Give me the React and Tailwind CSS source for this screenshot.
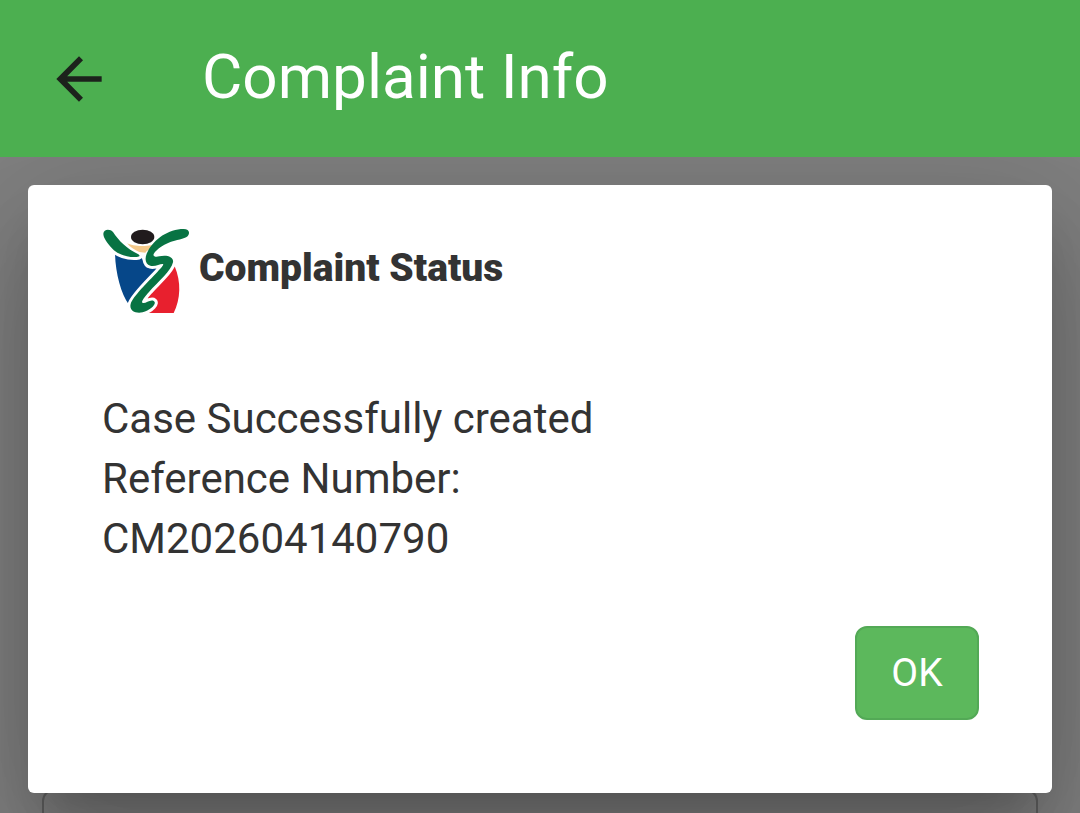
const ARM =
  "M22 35 C23 20 43 20 51 30 C68 56 92 80 127 97 C134 102 130 105 122 105 C96 107 62 98 45 76 C33 60 22 48 22 35Z";
const RIBBON =
  "M279 34 C278 48 257 51 236 56 C206 64 182 80 173 96 C170 104 180 105 190 103 C212 98 234 104 231 121 C226 146 186 180 159 210 C143 228 136 239 139 242 C147 247 160 232 172 236 C186 243 165 264 140 271 C117 276 99 265 104 246 C110 224 155 181 184 150 C197 136 204 129 201 126 C194 124 178 135 163 131 C146 126 145 106 156 87 C174 52 217 21 263 21 C274 21 280 26 279 34Z";

function Logo() {
  return (
    <svg viewBox="0 0 300 300" className="size-[100px] shrink-0" aria-hidden="true">
      <path d="M57 88 C75 102 98 108 124 111 L136 106 L152 136 L195 140 L98 247 C75 215 57 150 57 88Z" fill="#064789" />
      <path d="M236 133 C256 180 254 232 233 273 L148 273 L168 253 L152 228 L215 150Z" fill="#e8202e" />
      <g fill="#fff" stroke="#fff" strokeWidth="18" strokeLinejoin="round">
        <path d={ARM} />
        <path d={RIBBON} />
      </g>
      <path d="M93 63 C110 75 168 75 184 63 C175 79 157 80 148 92 L130 90 C116 84 102 76 93 63Z" fill="#f5c98a" />
      <path d={ARM} fill="#087343" />
      <path d={RIBBON} fill="#087343" />
      <ellipse cx="140" cy="45" rx="35" ry="22" fill="#211b1d" />
    </svg>
  );
}

export default function App() {
  return (
    <div className="flex min-h-screen flex-col overflow-hidden bg-[#808080] font-[Roboto,sans-serif]">
      <header className="relative z-20 flex h-[157px] items-center bg-[#4caf50] pl-[45px]">
        <button type="button" aria-label="Back" className="text-[#1c221c]">
          <svg viewBox="0 0 24 24" className="size-[68px]" fill="currentColor" aria-hidden="true">
            <path d="M20 11H7.83l5.59-5.59L12 4l-8 8 8 8 1.41-1.41L7.83 13H20v-2z" />
          </svg>
        </button>
        <h1 className="ml-[89px] pb-1 text-[62px] leading-[72px] text-white">Complaint Info</h1>
      </header>
      <main className="flex flex-1 flex-col pt-7">
        <div
          role="dialog"
          aria-labelledby="status-title"
          className="relative z-10 mx-7 flex flex-col rounded-md bg-white pt-[37px] pr-[73px] pb-[73px] pl-[74px] text-[#333] shadow-[0_31px_42px_-20px_rgba(0,0,0,0.2),0_67px_106px_8px_rgba(0,0,0,0.14),0_25px_129px_22px_rgba(0,0,0,0.12)]"
        >
          <div className="-ml-1.5 flex h-[100px] items-center">
            <Logo />
            <h2 id="status-title" className="ml-[3px] pb-2 text-[39px] leading-[56px] font-black">
              Complaint Status
            </h2>
          </div>
          <div className="mt-[67px] text-[42px] leading-[60px]">
            <p>Case Successfully created</p>
            <p>Reference Number:</p>
            <p>CM202604140790</p>
          </div>
          <button
            type="button"
            className="mt-[57px] h-[94px] w-[124px] self-end rounded-xl border-2 border-[#53a956] bg-[#5cb85c] text-[39px] leading-[56px] text-white"
          >
            OK
          </button>
        </div>
        <div className="mx-[42px] -mt-1 flex-1 rounded-t-xl border-x-2 border-t-2 border-[#606060]" />
      </main>
    </div>
  );
}
